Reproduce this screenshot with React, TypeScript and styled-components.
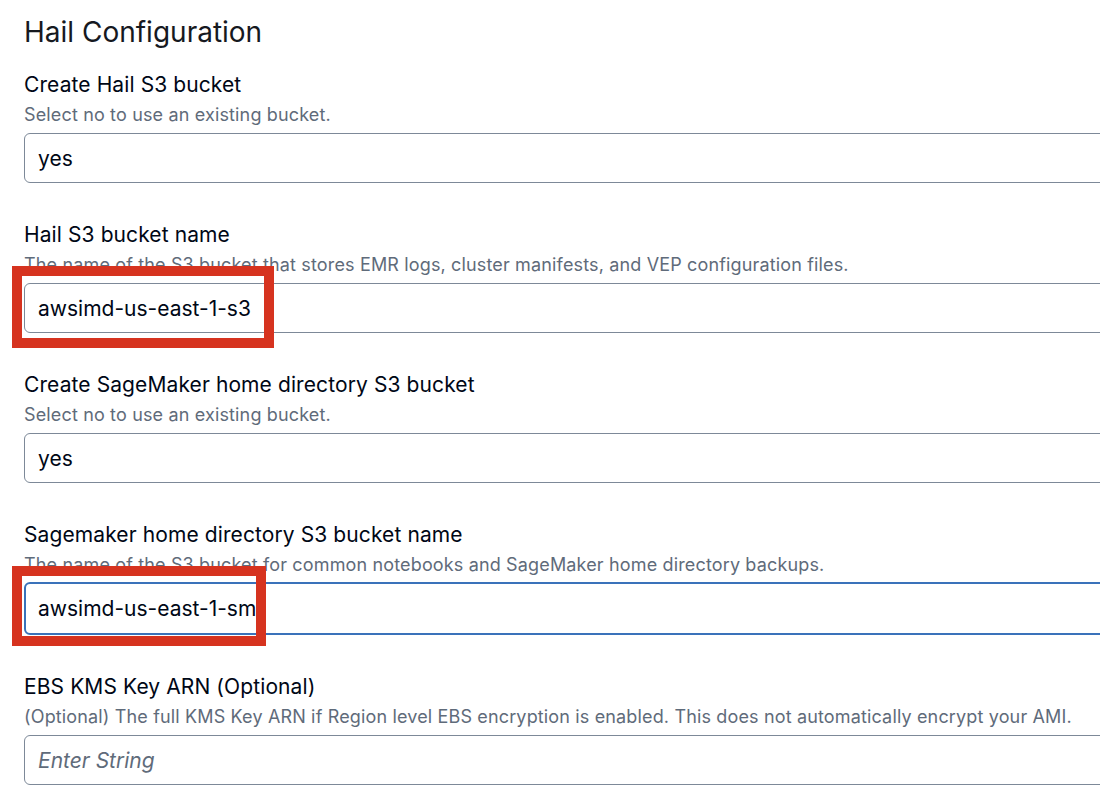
import React from "react";
import styled, { createGlobalStyle } from "styled-components";

const Global = createGlobalStyle`
  html, body { margin: 0; padding: 0; background: #ffffff; overflow: hidden; }
  body { font-family: Inter, "Open Sans", "Liberation Sans", sans-serif; color: #000716; }
`;

const Page = styled.div`
  width: 1100px;
  height: 796px;
  overflow: hidden;
  padding: 14px 0 0 24px;
  box-sizing: border-box;
`;

const Title = styled.h2`
  margin: 0 0 22px 0;
  font-size: 28px;
  line-height: 36px;
  font-weight: 400;
  color: #16191f;
`;

const Fields = styled.div`
  display: flex;
  flex-direction: column;
  gap: 39px;
`;

const Field = styled.div`
  display: flex;
  flex-direction: column;
`;

const Label = styled.label`
  font-size: 21px;
  line-height: 26px;
  letter-spacing: 0.1px;
  color: #000716;
`;

const Description = styled.div`
  font-size: 18px;
  line-height: 24px;
  letter-spacing: 0.15px;
  color: #5f6b7a;
  margin: 5px 0 6px 0;
  white-space: nowrap;
`;

const InputWrap = styled.div`
  position: relative;
  width: 1100px;
`;

const Input = styled.div<{ $focused?: boolean; $placeholder?: boolean }>`
  box-sizing: border-box;
  height: ${(p) => (p.$focused ? "53px" : "50px")};
  margin-top: ${(p) => (p.$focused ? "-1px" : "0")};
  border: ${(p) => (p.$focused ? "2px solid #3a72ba" : "1px solid #7d8998")};
  border-radius: 6px;
  padding-left: ${(p) => (p.$focused ? "12px" : "13px")};
  display: flex;
  align-items: center;
  font-size: 21px;
  color: ${(p) => (p.$placeholder ? "#5f6b7a" : "#000716")};
  font-style: ${(p) => (p.$placeholder ? "italic" : "normal")};
  white-space: nowrap;
  overflow: hidden;
`;

const Highlight = styled.div<{ $w: number; $h: number }>`
  position: absolute;
  left: -12px;
  top: -17px;
  width: ${(p) => p.$w}px;
  height: ${(p) => p.$h}px;
  border: 10px solid #d6331f;
  box-sizing: border-box;
  pointer-events: none;
`;

type FieldDef = {
  label: string;
  desc: string;
  value: string;
  focused?: boolean;
  placeholder?: boolean;
  highlight?: { w: number; h: number };
};

const fields: FieldDef[] = [
  { label: "Create Hail S3 bucket", desc: "Select no to use an existing bucket.", value: "yes" },
  {
    label: "Hail S3 bucket name",
    desc: "The name of the S3 bucket that stores EMR logs, cluster manifests, and VEP configuration files.",
    value: "awsimd-us-east-1-s3",
    highlight: { w: 262, h: 82 },
  },
  { label: "Create SageMaker home directory S3 bucket", desc: "Select no to use an existing bucket.", value: "yes" },
  {
    label: "Sagemaker home directory S3 bucket name",
    desc: "The name of the S3 bucket for common notebooks and SageMaker home directory backups.",
    value: "awsimd-us-east-1-sm",
    focused: true,
    highlight: { w: 254, h: 80 },
  },
  {
    label: "EBS KMS Key ARN (Optional)",
    desc: "(Optional) The full KMS Key ARN if Region level EBS encryption is enabled. This does not automatically encrypt your AMI.",
    value: "Enter String",
    placeholder: true,
  },
];

export default function App() {
  return (
    <>
      <Global />
      <Page>
        <Title>Hail Configuration</Title>
        <Fields>
          {fields.map((f) => (
            <Field key={f.label}>
              <Label>{f.label}</Label>
              <Description>{f.desc}</Description>
              <InputWrap>
                <Input $focused={f.focused} $placeholder={f.placeholder}>
                  {f.value}
                </Input>
                {f.highlight && <Highlight $w={f.highlight.w} $h={f.highlight.h} />}
              </InputWrap>
            </Field>
          ))}
        </Fields>
      </Page>
    </>
  );
}
